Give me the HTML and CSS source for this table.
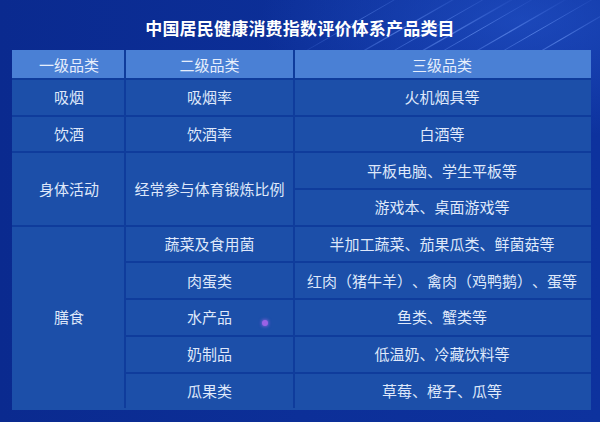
FILE: index.html
```html
<!DOCTYPE html>
<html lang="zh">
<head>
<meta charset="utf-8">
<link rel="stylesheet" href="styles.css">
</head>
<body>
<div class="page">
  <svg class="streaks" width="600" height="422" viewBox="0 0 600 422">
    <defs>
      <linearGradient id="sg" x1="0" y1="1" x2="1" y2="0">
        <stop offset="0" stop-color="#5d8cff" stop-opacity="0"/>
        <stop offset="0.5" stop-color="#7aa4ff" stop-opacity="0.55"/>
        <stop offset="1" stop-color="#5d8cff" stop-opacity="0"/>
      </linearGradient>
    </defs>
    <g stroke="url(#sg)" fill="none">
      <line x1="330" y1="70" x2="470" y2="-10" stroke-width="1.2"/>
      <line x1="360" y1="70" x2="500" y2="-10" stroke-width="1"/>
      <line x1="380" y1="75" x2="520" y2="-5" stroke-width="1.4"/>
      <line x1="410" y1="70" x2="540" y2="-5" stroke-width="1"/>
      <line x1="440" y1="72" x2="570" y2="-3" stroke-width="1.2"/>
      <line x1="470" y1="70" x2="600" y2="-5" stroke-width="1"/>
      <line x1="500" y1="75" x2="620" y2="5" stroke-width="1.2"/>
      <line x1="290" y1="60" x2="420" y2="-15" stroke-width="0.8"/>
    </g>
  </svg>
  <h1 class="title">中国居民健康消费指数评价体系产品类目</h1>
  <table class="grid">
    <colgroup>
      <col class="c1"><col class="c2"><col class="c3">
    </colgroup>
    <thead>
      <tr class="head"><th>一级品类</th><th>二级品类</th><th>三级品类</th></tr>
    </thead>
    <tbody>
      <tr><td>吸烟</td><td>吸烟率</td><td>火机烟具等</td></tr>
      <tr><td>饮酒</td><td>饮酒率</td><td>白酒等</td></tr>
      <tr><td rowspan="2">身体活动</td><td rowspan="2">经常参与体育锻炼比例</td><td>平板电脑、学生平板等</td></tr>
      <tr><td>游戏本、桌面游戏等</td></tr>
      <tr><td rowspan="5">膳食</td><td>蔬菜及食用菌</td><td>半加工蔬菜、茄果瓜类、鲜菌菇等</td></tr>
      <tr><td>肉蛋类</td><td>红肉（猪牛羊）、禽肉（鸡鸭鹅）、蛋等</td></tr>
      <tr><td>水产品</td><td>鱼类、蟹类等</td></tr>
      <tr><td>奶制品</td><td>低温奶、冷藏饮料等</td></tr>
      <tr><td>瓜果类</td><td>草莓、橙子、瓜等</td></tr>
    </tbody>
  </table>
  <span class="dot"></span>
</div>
</body>
</html>
```
FILE: styles.css
```css
html, body {
  margin: 0;
  padding: 0;
}
body {
  width: 600px;
  height: 422px;
  overflow: hidden;
  font-family: "Noto Sans CJK SC", "Noto Sans", sans-serif;
  text-spacing-trim: space-all;
}
.page {
  position: relative;
  width: 600px;
  height: 422px;
  box-sizing: border-box;
  padding: 0 12px;
  background:
    radial-gradient(ellipse 260px 120px at 520px 20px, rgba(40, 90, 210, 0.55), rgba(40, 90, 210, 0) 100%),
    linear-gradient(90deg, #0a2a8f 0%, #0c2f98 50%, #0d329e 100%);
}
.streaks {
  position: absolute;
  left: 0;
  top: 0;
  pointer-events: none;
}
.title {
  position: relative;
  margin: 0;
  height: 50px;
  display: flex;
  align-items: center;
  justify-content: center;
  padding-top: 5px;
  box-sizing: border-box;
  font-size: 17px;
  font-weight: 700;
  color: #ffffff;
  letter-spacing: 0.2px;
}
.grid {
  position: relative;
  width: 577px;
  border-collapse: collapse;
  table-layout: fixed;
  color: #dfe8fa;
  font-size: 15px;
  background: #1c4fa9;
}
.c1 { width: 112px; }
.c2 { width: 169px; }
.c3 { width: 296px; }
.grid th,
.grid td {
  border: 2px solid #0f3c9c;
  text-align: center;
  vertical-align: middle;
  padding: 0;
  line-height: 20px;
}
.grid th {
  background: #4a80d5;
  font-weight: 400;
  color: #e6eefc;
  height: 26px;
}
.grid td {
  height: 34.7px;
}
.grid tbody tr:first-child td {
  border-top-width: 1px;
}
.grid tr > :first-child {
  border-left-color: #1c4fa9;
}
.grid .head > :first-child {
  border-left-color: #4a80d5;
}
.grid tr > :last-child {
  border-right-color: #1c4fa9;
}
.grid .head > :last-child {
  border-right-color: #4a80d5;
}
.grid thead th {
  border-top-color: #4a80d5;
}
.grid tbody tr:last-child td,
.grid td[rowspan="5"] {
  border-bottom-color: #1c4fa9;
}
.dot {
  position: absolute;
  left: 262px;
  top: 320px;
  width: 6px;
  height: 6px;
  border-radius: 50%;
  background: #9a62e6;
  box-shadow: 0 0 3px 1px rgba(154, 98, 230, 0.6);
}
```
